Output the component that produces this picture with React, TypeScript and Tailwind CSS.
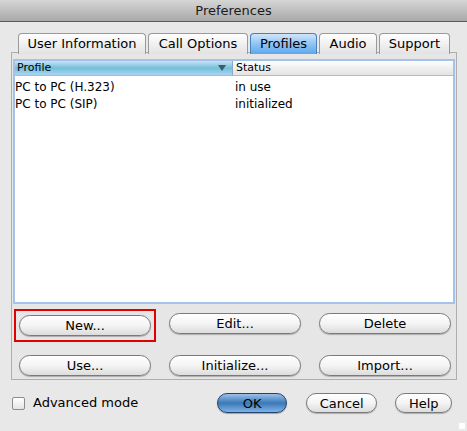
const tabs = [
  { label: "User Information", w: "w-[128px]" },
  { label: "Call Options", w: "w-[100px]" },
  { label: "Profiles", w: "w-[67px]" },
  { label: "Audio", w: "w-[58px]" },
  { label: "Support", w: "w-[71px]" },
];

const rows = [
  { profile: "PC to PC (H.323)", status: "in use" },
  { profile: "PC to PC (SIP)", status: "initialized" },
];

function Pill({ label, className = "" }: { label: string; className?: string }) {
  return (
    <button
      className={
        "h-[21px] rounded-full border border-[#7a7a7a] bg-gradient-to-b from-white via-[#f4f4f4] to-[#dcdcdc] text-[13px] text-black leading-none shadow-[0_1px_1px_rgba(0,0,0,0.25)] " +
        className
      }
    >
      {label}
    </button>
  );
}

export default function App() {
  return (
    <div className="w-[467px] h-[431px] bg-[#e8e8e8] font-['DejaVu_Sans',sans-serif] text-black relative overflow-hidden">
      {/* title bar */}
      <div className="h-[22px] bg-gradient-to-b from-[#d6d6d6] to-[#a9a9a9] border-b border-[#5a5a5a] flex items-center justify-center text-[13px] text-[#1a1a1a]">
        Preferences
      </div>

      {/* tabs */}
      <div className="mt-[11px] pl-[18px] flex gap-[2px] h-[19px] relative z-10">
        {tabs.map((t) => {
          const active = t.label === "Profiles";
          return (
            <div
              key={t.label}
              className={
                "h-[21px] flex items-center justify-center text-[13px] rounded-t-[4px] border border-b-0 " +
                t.w +
                " " +
                (active
                  ? "bg-gradient-to-b from-[#cfe6fb] via-[#8fc3f2] to-[#5aa8ee] border-[#4a7fc0]"
                  : "bg-gradient-to-b from-white to-[#e2e2e2] border-[#9a9a9a]")
              }
            >
              {t.label}
            </div>
          );
        })}
      </div>

      {/* group box */}
      <div className="ml-[11px] w-[446px] h-[328px] border border-[#aeaeae] bg-[#e6e6e6] px-[1px] pt-[6px] flex flex-col">
        <div className="h-[245px] border-2 border-[#a3c3ea] bg-white flex flex-col">
          <div className="flex h-[15px] text-[11px] border-b border-[#b9b9b9]">
            <div className="w-[218px] flex items-center justify-between pl-[2px] pr-[6px] bg-gradient-to-b from-[#c9e2f8] via-[#72c0d9] to-[#a8d4f2] border-r border-[#8aa9c9]">
              <span>Profile</span>
              <svg width="8" height="6" viewBox="0 0 8 6">
                <path d="M0 0 L8 0 L4 6 Z" fill="#3c5a6e" />
              </svg>
            </div>
            <div className="flex-1 flex items-center pl-[3px] bg-gradient-to-b from-white via-[#efefef] to-[#e4e4e4]">
              Status
            </div>
          </div>
          <div className="pt-[2px]">
            {rows.map((r) => (
              <div key={r.profile} className="flex h-[17px] items-center text-[12px]">
                <div className="w-[219px]">{r.profile}</div>
                <div className="flex-1 pl-[1px]">{r.status}</div>
              </div>
            ))}
          </div>
        </div>

        <div className="mt-[9px] pl-[6px] flex gap-[18px]">
          <div className="relative">
            <Pill label="New..." className="w-[132px]" />
            <div className="absolute -left-[5px] -right-[5px] -top-[4px] -bottom-[5px] border-2 border-[#e00000]" />
          </div>
          <Pill label="Edit..." className="w-[132px]" />
          <Pill label="Delete" className="w-[132px]" />
        </div>
        <div className="mt-[18px] pl-[6px] flex gap-[18px]">
          <Pill label="Use..." className="w-[132px]" />
          <Pill label="Initialize..." className="w-[132px]" />
          <Pill label="Import..." className="w-[132px]" />
        </div>
      </div>

      {/* bottom row */}
      <div className="mt-[13px] flex items-center h-[20px]">
        <div className="ml-[12px] w-[13px] h-[13px] border border-[#8c8c8c] rounded-[2px] bg-gradient-to-b from-white to-[#e4e4e4]" />
        <span className="ml-[8px] text-[13px]">Advanced mode</span>
        <button className="ml-[79px] w-[70px] h-[20px] rounded-full border border-[#23416a] bg-gradient-to-b from-[#9cc2e8] via-[#3a78b8] to-[#7fb3e4] text-[13px] leading-none shadow-[0_1px_1px_rgba(0,0,0,0.3)]">
          OK
        </button>
        <Pill label="Cancel" className="ml-[19px] w-[71px] !h-[20px]" />
        <Pill label="Help" className="ml-[18px] w-[57px] !h-[20px]" />
      </div>

      <div className="absolute right-[2px] bottom-[2px] w-[6px] h-[6px] bg-white" />
    </div>
  );
}
